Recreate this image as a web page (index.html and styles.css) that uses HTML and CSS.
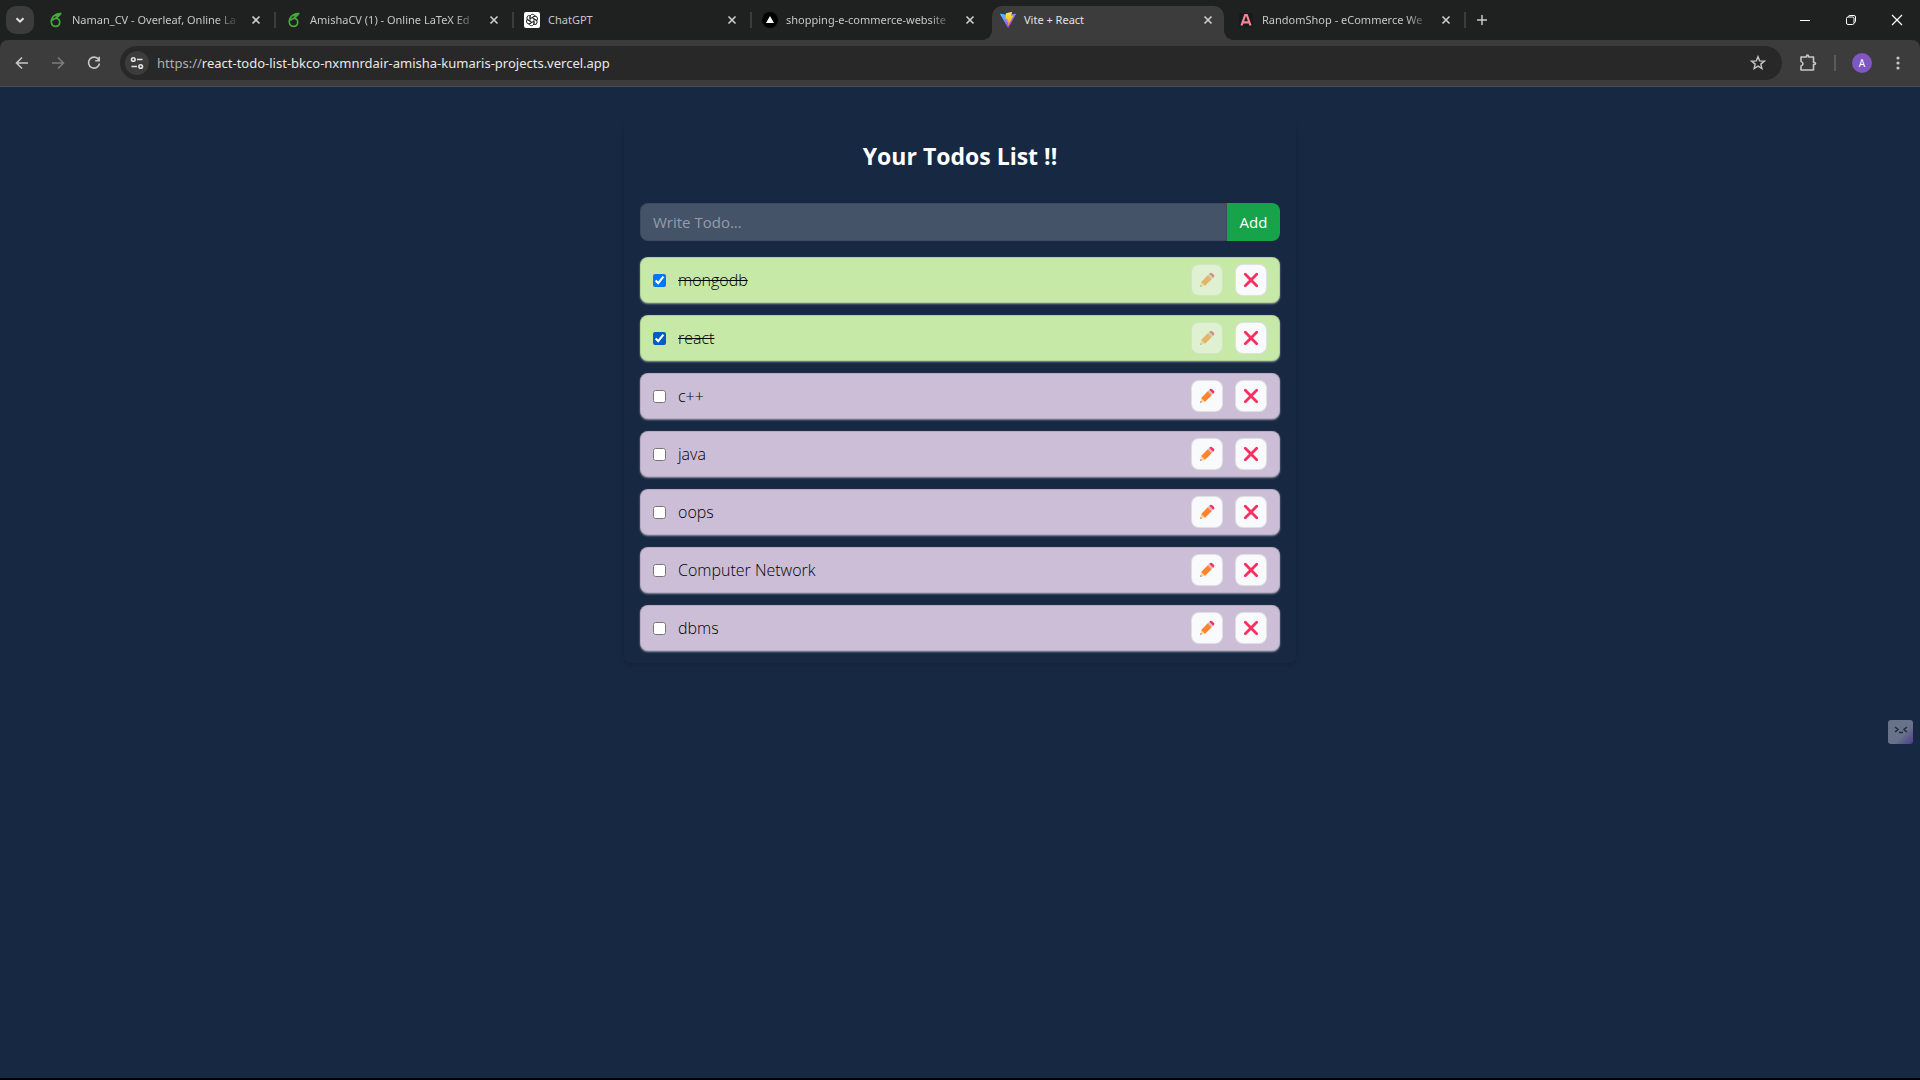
FILE: index.html
```html
<!DOCTYPE html>
<html lang="en">
<head>
<meta charset="utf-8">
<title>Vite + React</title>
<link rel="stylesheet" href="styles.css">
</head>
<body>
<svg class="defs" aria-hidden="true">
  <symbol id="close" viewBox="0 0 16 16"><path d="M4.5 4.5l7 7M11.5 4.5l-7 7" fill="none" stroke="currentColor" stroke-width="1.6"/></symbol>
  <symbol id="overleaf" viewBox="0 0 16 16"><path d="M13.4 1.6C9 1.300 5.600 3.200 3.900 6.600 2.600 9.200 3.100 14.300 7.400 14.300c2.700 0 4.300-1.900 4.300-4.100 0-2.300-1.600-3.700-3.600-3.700-1.700 0-3.100.8-3.800 2M7.200 3.300c1.500 1 4.400.3 5.600-1.500M7.200 6.500c1.500-.8 3.200-2 4.600-3.500" fill="none" stroke="#46a83c" stroke-width="1.700"/></symbol>
  <symbol id="pencil" viewBox="-.5 -.5 17 17">
    <path d="M.8 15.200l1-5.200 4.200 4.200z" fill="#ffd19b"/><path d="M.8 15.200l.5-1.600 1.100 1.100z" fill="#4a4350"/>
    <path d="M1.800 10l7-7L13 7.200l-7 7z" fill="#ff822d"/><path d="M8.800 3l1.600-1.600 4.200 4.200L13 7.200z" fill="#c9bcc8"/>
    <path d="M10.400 1.400l.6-.6c.8-.8 1.700-.8 2.500 0l1.700 1.700c.8.8.8 1.700 0 2.500l-.6.6z" fill="#f0305e"/>
  </symbol>
  <symbol id="cross" viewBox="0 0 16 16"><path d="M2.300 2.300l11.400 11.400M13.700 2.300L2.300 13.700" fill="none" stroke="#f92f60" stroke-width="2.800" stroke-linecap="round"/></symbol>
</svg>

<header class="browser">
  <div class="tabstrip">
    <button class="tab-search" aria-label="Search tabs"><svg viewBox="0 0 16 16" width="16" height="16"><path d="M4.500 6.200L8 9.700l3.500-3.500" fill="none" stroke="currentColor" stroke-width="2"/></svg></button>
    <nav class="tabs">
      <div class="tab"><svg class="favicon"><use href="#overleaf"/></svg><span class="title fade">Naman_CV - Overleaf, Online La</span><button class="tab-close" aria-label="Close tab"><svg><use href="#close"/></svg></button></div>
      <div class="tab"><svg class="favicon"><use href="#overleaf"/></svg><span class="title fade">AmishaCV (1) - Online LaTeX Ed</span><button class="tab-close" aria-label="Close tab"><svg><use href="#close"/></svg></button></div>
      <div class="tab"><svg class="favicon" viewBox="0 0 16 16"><rect width="16" height="16" rx="2" fill="#fff"/><g fill="none" stroke="#222" stroke-width=".9"><path id="petal" d="M6 9.200V4.800C6 1.800 10.200 1.400 11 4.200M8 5.700l3.300-1.900"/><use href="#petal" transform="rotate(60 8 8)"/><use href="#petal" transform="rotate(120 8 8)"/><use href="#petal" transform="rotate(180 8 8)"/><use href="#petal" transform="rotate(240 8 8)"/><use href="#petal" transform="rotate(300 8 8)"/></g></svg><span class="title">ChatGPT</span><button class="tab-close" aria-label="Close tab"><svg><use href="#close"/></svg></button></div>
      <div class="tab before-active"><svg class="favicon" viewBox="0 0 16 16"><circle cx="8" cy="8" r="8" fill="#000"/><path d="M8 4l4 7H4z" fill="#fff"/></svg><span class="title fade">shopping-e-commerce-website</span><button class="tab-close" aria-label="Close tab"><svg><use href="#close"/></svg></button></div>
      <div class="tab active"><svg class="favicon" viewBox="0 0 16 16">
        <defs><linearGradient id="v1" x1="0" y1="0" x2=".6" y2="1"><stop offset="0" stop-color="#41d1ff"/><stop offset="1" stop-color="#bd34fe"/></linearGradient><linearGradient id="v2" x1="0" y1="0" x2="0" y2="1"><stop offset="0" stop-color="#ffea83"/><stop offset=".2" stop-color="#ffdd35"/><stop offset="1" stop-color="#ffa800"/></linearGradient></defs>
        <path d="M15.900 2.300L8.500 15.600c-.2.300-.6.300-.7 0L.1 2.300c-.2-.3.100-.7.400-.6L8 3l7.500-1.300c.4-.1.600.3.400.6z" fill="url(#v1)"/><path d="M11.600.1L6.100 1.200c-.1 0-.2.100-.2.200l-.3 5.700c0 .1.100.2.300.2l1.500-.3c.2 0 .3.100.2.300l-.4 2.200c0 .200.100.3.200.2l1-.3c.1 0 .3.100.2.300l-.7 3.500c0 .200.200.3.400.1l4.800-9.400c.1-.1 0-.3-.2-.3l-1.600.3c-.1 0-.3-.1-.2-.3l1-3.400c.1-.1 0-.2-.200-.2z" fill="url(#v2)"/></svg><span class="title">Vite + React</span><button class="tab-close" aria-label="Close tab"><svg><use href="#close"/></svg></button></div>
      <div class="tab"><svg class="favicon" viewBox="0 0 16 16"><rect x="1" y="1" width="14" height="14" rx="2" fill="#171b20"/><path d="M3.500 13.500L7.200 3h1.600l3.700 10.500M5 10.300h6" fill="none" stroke="#fa8592" stroke-width="2.200"/></svg><span class="title fade">RandomShop - eCommerce We</span><button class="tab-close" aria-label="Close tab"><svg><use href="#close"/></svg></button></div>
    </nav>
    <button class="new-tab" aria-label="New tab"><svg viewBox="0 0 16 16" width="16" height="16"><path d="M8 3v10M3 8h10" fill="none" stroke="currentColor" stroke-width="1.500"/></svg></button>
    <div class="window-controls">
      <button aria-label="Minimize"><svg viewBox="0 0 12 12"><path d="M1 6.500h10" stroke="currentColor"/></svg></button>
      <button aria-label="Restore"><svg viewBox="0 0 12 12" fill="none" stroke="currentColor"><rect x="1.500" y="3" width="7.500" height="7.500" rx="1.500"/><path d="M3.500 3V2.500q0-1 1-1H9q1.500 0 1.500 1.500v4.500q0 1-1 1"/></svg></button>
      <button aria-label="Close window"><svg viewBox="0 0 12 12"><path d="M1 1l10 10M11 1L1 11" stroke="currentColor" stroke-width="1.200"/></svg></button>
    </div>
  </div>
  <div class="toolbar">
    <button class="tool" aria-label="Back"><svg viewBox="0 0 16 16"><path d="M14 8H3M8 2.500L2.500 8 8 13.500" fill="none" stroke="currentColor" stroke-width="1.600"/></svg></button>
    <button class="tool dim" aria-label="Forward"><svg viewBox="0 0 16 16"><path d="M2 8h11M8 2.500L13.500 8 8 13.500" fill="none" stroke="currentColor" stroke-width="1.600"/></svg></button>
    <button class="tool" aria-label="Reload"><svg viewBox="0 0 16 16"><path d="M12.600 4.500A5.500 5.500 0 1 0 13.500 8.500M13.200 1.800v4h-4" fill="none" stroke="currentColor" stroke-width="1.600"/></svg></button>
    <div class="omnibox">
      <button class="site-info" aria-label="View site information"><svg viewBox="0 0 16 16" width="16" height="16" fill="none" stroke="currentColor" stroke-width="1.600"><circle cx="4.300" cy="4.500" r="1.800"/><path d="M8 4.500h5.500M2.500 11.500H8"/><circle cx="11.700" cy="11.500" r="1.800"/></svg></button>
      <a class="url" href="#"><span>https://</span>react-todo-list-bkco-nxmnrdair-amisha-kumaris-projects.vercel.app</a>
      <button class="star" aria-label="Bookmark this tab"><svg viewBox="0 0 16 16" width="16" height="16"><path d="M8 1.700l1.700 4.200 4.600.3-3.500 2.900 1.100 4.400L8 11.100l-3.900 2.400 1.100-4.400L1.700 6.200l4.600-.3z" fill="none" stroke="currentColor" stroke-width="1.400"/></svg></button>
    </div>
    <button class="tool extensions" aria-label="Extensions"><svg viewBox="0 0 18 18"><path d="M2 3h5.500V2q0-1 1-1t1 1v1h5v5.500h1q1 0 1 1t-1 1h-1V16H2v-4q2-.6 2-2.200T2 7.600z" fill="none" stroke="currentColor" stroke-width="1.600" stroke-linejoin="round"/></svg></button>
    <span class="divider"></span>
    <button class="avatar" aria-label="Profile">A</button>
    <button class="tool menu" aria-label="Menu"><svg viewBox="0 0 16 16" fill="currentColor"><circle cx="8" cy="3" r="1.600"/><circle cx="8" cy="8" r="1.600"/><circle cx="8" cy="13" r="1.600"/></svg></button>
  </div>
</header>

<main class="page">
  <section class="card">
    <h1>Your Todos List !!</h1>
    <form class="todo-form">
      <input type="text" placeholder="Write Todo..." aria-label="Write Todo">
      <button type="button">Add</button>
    </form>
    <ul class="todos">
      <li class="todo done"><input type="checkbox" id="t1" checked><label for="t1">mongodb</label><button disabled aria-label="Edit"><svg><use href="#pencil"/></svg></button><button aria-label="Delete"><svg><use href="#cross"/></svg></button></li>
      <li class="todo done"><input type="checkbox" class="hovered" id="t2" checked><label for="t2">react</label><button disabled aria-label="Edit"><svg><use href="#pencil"/></svg></button><button aria-label="Delete"><svg><use href="#cross"/></svg></button></li>
      <li class="todo"><input type="checkbox" id="t3"><label for="t3">c++</label><button aria-label="Edit"><svg><use href="#pencil"/></svg></button><button aria-label="Delete"><svg><use href="#cross"/></svg></button></li>
      <li class="todo"><input type="checkbox" id="t4"><label for="t4">java</label><button aria-label="Edit"><svg><use href="#pencil"/></svg></button><button aria-label="Delete"><svg><use href="#cross"/></svg></button></li>
      <li class="todo"><input type="checkbox" id="t5"><label for="t5">oops</label><button aria-label="Edit"><svg><use href="#pencil"/></svg></button><button aria-label="Delete"><svg><use href="#cross"/></svg></button></li>
      <li class="todo"><input type="checkbox" id="t6"><label for="t6">Computer Network</label><button aria-label="Edit"><svg><use href="#pencil"/></svg></button><button aria-label="Delete"><svg><use href="#cross"/></svg></button></li>
      <li class="todo"><input type="checkbox" id="t7"><label for="t7">dbms</label><button aria-label="Edit"><svg><use href="#pencil"/></svg></button><button aria-label="Delete"><svg><use href="#cross"/></svg></button></li>
    </ul>
  </section>
</main>
<button class="assistant" aria-label="Open assistant"><svg viewBox="0 0 24 24" width="24" height="24"><path d="M6 7l3 2.500L6 12M18 7l-3 2.500 3 2.500M10 12.500h4" fill="none" stroke="#1f2b45" stroke-width="1.600"/></svg></button>
</body>
</html>
```
FILE: styles.css
```css
* { box-sizing: border-box; }

body {
  margin: 0;
  min-height: 100vh;
  display: flex;
  flex-direction: column;
  background: #172842;
  border-bottom: 2px solid #000;
  font-family: "Open Sans", "Noto Sans", sans-serif;
  font-size: 15px;
}

button {
  margin: 0;
  padding: 0;
  border: 0;
  background: none;
  color: inherit;
  font: inherit;
  display: flex;
  align-items: center;
  justify-content: center;
}

.defs { display: none; }

/* Browser frame */
.browser {
  background: #1f2020;
  color: #c7c7c7;
  font-family: "Noto Sans", "Open Sans", sans-serif;
}

.tabstrip {
  display: flex;
  align-items: center;
  height: 40px;
  padding-left: 6px;
}

.tab-search {
  width: 28px;
  height: 28px;
  margin-right: 6px;
  border-radius: 10px;
  background: #3c3c3c;
  color: #e3e3e3;
}

.tabs { display: flex; align-self: stretch; padding-top: 6px; }

.tab {
  position: relative;
  display: flex;
  align-items: center;
  gap: 8px;
  width: 232px;
  height: 34px;
  margin-right: 6px;
  padding: 0 8px 6px;
  font-size: 11px;
}

.tab::after {
  content: "";
  position: absolute;
  top: 6px;
  right: -4px;
  width: 2px;
  height: 16px;
  background: #3c3c3c;
}

.before-active::after { display: none; }

.favicon { width: 16px; height: 16px; flex: none; }

.title {
  flex: 1;
  white-space: nowrap;
  line-height: 18px;
}

.fade {
  -webkit-mask-image: linear-gradient(to left, transparent, #000 24px);
  mask-image: linear-gradient(to left, transparent, #000 24px);
}

.tab-close { flex: none; color: #d0d0d0; }
.tab-close svg { width: 16px; height: 16px; }

.active {
  background: #3c3c3c;
  border-radius: 10px 10px 0 0;
  color: #e3e3e3;
}

.active::before,
.active::after {
  content: "";
  position: absolute;
  top: auto;
  bottom: 0;
  width: 10px;
  height: 10px;
}

.active::before {
  left: -10px;
  background: radial-gradient(circle at 0 0, transparent 10px, #3c3c3c 10px);
}

.active::after {
  right: -10px;
  background: radial-gradient(circle at 100% 0, transparent 10px, #3c3c3c 10px);
}

.new-tab { width: 28px; height: 28px; margin-right: auto; }

.window-controls { display: flex; color: #fff; }
.window-controls button { width: 46px; height: 40px; }
.window-controls svg { width: 12px; height: 12px; }

.toolbar {
  display: flex;
  align-items: center;
  height: 47px;
  padding: 0 8px 1px 4px;
  border-bottom: 1px solid #4a4b4d;
  border-radius: 8px 8px 0 0;
  background: #3c3c3c;
}

.tool { width: 36px; height: 34px; flex: none; }
.tool svg { width: 16px; height: 16px; }
.dim { color: #7c7c7c; }

.omnibox {
  display: flex;
  flex: 1;
  align-items: center;
  height: 34px;
  margin-left: 8px;
  padding: 0 16px 0 5px;
  border-radius: 17px;
  background: #282828;
}

.site-info {
  width: 24px;
  height: 24px;
  border-radius: 12px;
  background: #3c3c3c;
  color: #e3e3e3;
}

.url {
  flex: 1;
  margin-left: 8px;
  color: #e8e8e8;
  font-size: 13px;
  text-decoration: none;
}

.url span { color: #b0b0b0; }

.extensions { margin-left: 8px; }
.extensions svg { width: 18px; height: 18px; }
.divider { width: 2px; height: 16px; margin: 0 16px 0 8px; background: #5a5a5a; }

.avatar {
  width: 20px;
  height: 20px;
  border-radius: 10px;
  background: #7e57c2;
  color: #fff;
  font-size: 10px;
}

.menu { width: 28px; margin-left: 12px; }

/* Todo page */
.page { flex: 1; padding-top: 32px; }

.card {
  max-width: 672px;
  margin: 0 auto;
  padding: 20px 16px 12px;
  border-radius: 8px;
  box-shadow: 0 4px 6px -1px rgba(0, 0, 0, .1), 0 2px 4px -2px rgba(0, 0, 0, .1);
}

h1 {
  margin: 0 0 30px;
  color: #fff;
  font-size: 23px;
  line-height: 34px;
  font-weight: 700;
  text-align: center;
}

.todo-form { display: flex; margin-bottom: 16px; }

.todo-form input {
  flex: 1;
  min-width: 0;
  height: 38px;
  padding: 0 12px;
  border: 1px solid rgba(0, 0, 0, .1);
  border-radius: 8px 0 0 8px;
  background: #455368;
  color: #fff;
  font: inherit;
}

.todo-form input::placeholder { color: #949cab; }

.todo-form button {
  width: 53px;
  border-radius: 0 8px 8px 0;
  background: #16a34a;
  color: #fff;
  font-weight: 500;
}

.todos {
  display: flex;
  flex-direction: column;
  gap: 12px;
  margin: 0;
  padding: 0;
  list-style: none;
}

.todo {
  display: flex;
  align-items: center;
  gap: 12px;
  padding: 6px 12px;
  border: 1px solid rgba(0, 0, 0, .1);
  border-radius: 8px;
  background: #ccbed7;
  box-shadow: 0 1px 2px rgba(255, 255, 255, .5);
  color: #000;
}

.done { background: #c6e9a7; }
.done label { text-decoration: line-through; }

.todo input { width: 13px; height: 13px; margin: 0; accent-color: #0075ff; }
.todo .hovered { accent-color: #005cc8; }

.todo label { flex: 1; font-size: 16px; font-weight: 300; }

.todo button {
  width: 32px;
  height: 32px;
  border: 1px solid rgba(0, 0, 0, .1);
  border-radius: 8px;
  background: #f9fafb;
}

.todo button svg { width: 16px; height: 16px; }
.todo button:disabled { opacity: .5; }

.assistant {
  position: fixed;
  right: 7px;
  top: 720px;
  width: 25px;
  height: 24px;
  border-radius: 3px;
  background: linear-gradient(135deg, #687389 60%, #4f3b93);
}
```
